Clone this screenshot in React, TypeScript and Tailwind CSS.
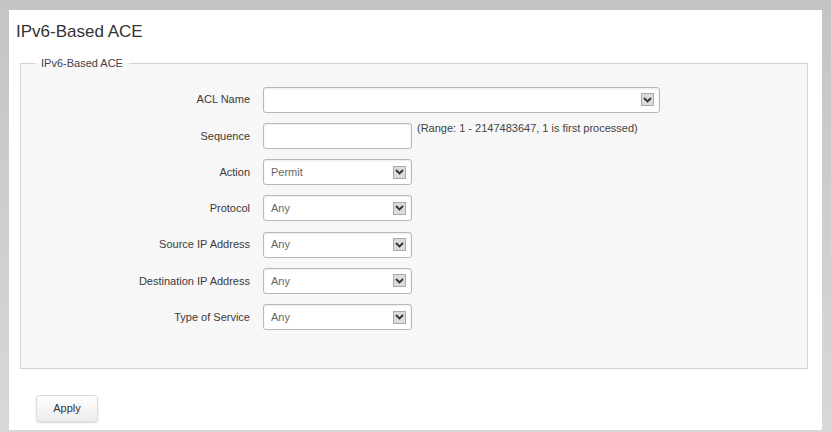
import React from "react";

// IPv6-based ACE settings form
const ROWS: { label: string; value?: string; kind: "select" | "input"; wide?: boolean; hint?: string }[] = [
  { label: "ACL Name", kind: "select", wide: true },
  { label: "Sequence", kind: "input", hint: "(Range: 1 - 2147483647, 1 is first processed)" },
  { label: "Action", kind: "select", value: "Permit" },
  { label: "Protocol", kind: "select", value: "Any" },
  { label: "Source IP Address", kind: "select", value: "Any" },
  { label: "Destination IP Address", kind: "select", value: "Any" },
  { label: "Type of Service", kind: "select", value: "Any" },
];

function Arrow() {
  return (
    <span className="flex h-[13px] w-[13px] items-center justify-center border border-[#a9a9a9] bg-[#dcdcdc]">
      <svg width="9" height="6" viewBox="0 0 9 6">
        <path d="M1 1 L4.5 4.5 L8 1" fill="none" stroke="#333" strokeWidth="1.8" />
      </svg>
    </span>
  );
}

function Field({ row }: { row: (typeof ROWS)[0] }) {
  const width = row.wide ? "w-[397px]" : "w-[149px]";
  return (
    <div className="flex h-[26px] items-center">
      <div className="w-[242px] pr-[13px] text-right text-[11px] text-[#3a3a3a]">{row.label}</div>
      <div
        className={`flex h-[26px] ${width} items-center justify-between rounded-[3px] border border-[#b8b8b8] bg-white pl-[7px] pr-[5px] shadow-[inset_0_1px_2px_rgba(0,0,0,0.08)]`}
      >
        <span className="text-[11px] text-[#666]">{row.value ?? ""}</span>
        {row.kind === "select" && <Arrow />}
      </div>
      {row.hint && (
        <span className="-mt-[3px] ml-[5px] self-start text-[11px] text-[#444]">{row.hint}</span>
      )}
    </div>
  );
}

export default function App() {
  return (
    <div
      className="h-[432px] w-[831px] bg-gradient-to-b from-[#c4c4c4] to-[#d8d8d8] pb-[2px] pl-[9px] pr-[9px] pt-[10px]"
      style={{ fontFamily: '"Liberation Sans", Arial, sans-serif' }}
    >
      <div className="h-full w-full bg-white pl-[11px] pr-[5px]">
        <h1 className="-ml-[4px] pt-[11px] text-[17px] leading-[22px] text-[#333]">IPv6-Based ACE</h1>
        <fieldset className="mt-[12px] h-[314px] w-[788px] border border-[#d4d4d4] bg-[#f7f7f7] px-0 pt-[15px]">
          <legend className="ml-[14px] px-[6px] text-[11px] text-[#444]">IPv6-Based ACE</legend>
          <div className="flex flex-col gap-[10.3px]">
            {ROWS.map((row) => (
              <Field key={row.label} row={row} />
            ))}
          </div>
        </fieldset>
        <div className="mt-[26px] pl-[16px]">
          <button className="h-[27px] w-[62px] rounded-[3px] border border-[#dcdcdc] bg-gradient-to-b from-white to-[#ececec] text-[11px] text-[#333] shadow-[0_1px_2px_rgba(0,0,0,0.15)]">
            Apply
          </button>
        </div>
      </div>
    </div>
  );
}
